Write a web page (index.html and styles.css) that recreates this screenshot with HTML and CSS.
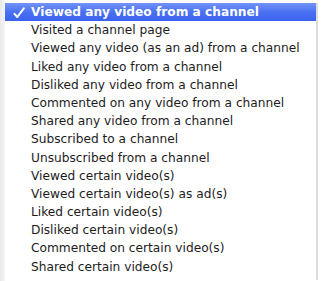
FILE: index.html
```html
<!DOCTYPE html>
<html>
<head>
<meta charset="utf-8">
<link rel="stylesheet" href="styles.css">
</head>
<body>
<div class="frame">
  <ul class="menu">
    <li class="item selected"><svg class="check" viewBox="0 0 12 12" width="12" height="12"><path d="M1.5 6.8 L4.3 10 L10.8 1.3" fill="none" stroke="#ffffff" stroke-width="2" stroke-linecap="round" stroke-linejoin="round"/></svg>Viewed any video from a channel</li>
    <li class="item">Visited a channel page</li>
    <li class="item">Viewed any video (as an ad) from a channel</li>
    <li class="item">Liked any video from a channel</li>
    <li class="item">Disliked any video from a channel</li>
    <li class="item">Commented on any video from a channel</li>
    <li class="item">Shared any video from a channel</li>
    <li class="item">Subscribed to a channel</li>
    <li class="item">Unsubscribed from a channel</li>
    <li class="item">Viewed certain video(s)</li>
    <li class="item">Viewed certain video(s) as ad(s)</li>
    <li class="item">Liked certain video(s)</li>
    <li class="item">Disliked certain video(s)</li>
    <li class="item">Commented on certain video(s)</li>
    <li class="item">Shared certain video(s)</li>
  </ul>
</div>
</body>
</html>
```
FILE: styles.css
```css
html, body {
  margin: 0;
  padding: 0;
  background: #ffffff;
}
.frame {
  width: 321px;
  height: 281px;
  box-sizing: border-box;
  padding: 3px 3px 0 5px;
  background: linear-gradient(to right, #e9e9e9 0, #f5f5f5 5px, #ffffff 5px);
  overflow: hidden;
}
.menu {
  list-style: none;
  margin: 0;
  padding: 0 0 4px 0;
  background: #ffffff;
  border-right: 2px solid #dcdcdc;
  font-family: "DejaVu Sans", sans-serif;
  font-size: 12.2px;
  color: #1c1c1c;
}
.item {
  position: relative;
  height: 18.2px;
  line-height: 18px;
  padding-left: 26px;
  white-space: nowrap;
}
.selected {
  background: linear-gradient(to bottom, #7393f7 0%, #4a71f2 50%, #3a62ee 100%);
  color: #ffffff;
  font-weight: bold;
}
.check {
  position: absolute;
  left: 8px;
  top: 4px;
}
```
